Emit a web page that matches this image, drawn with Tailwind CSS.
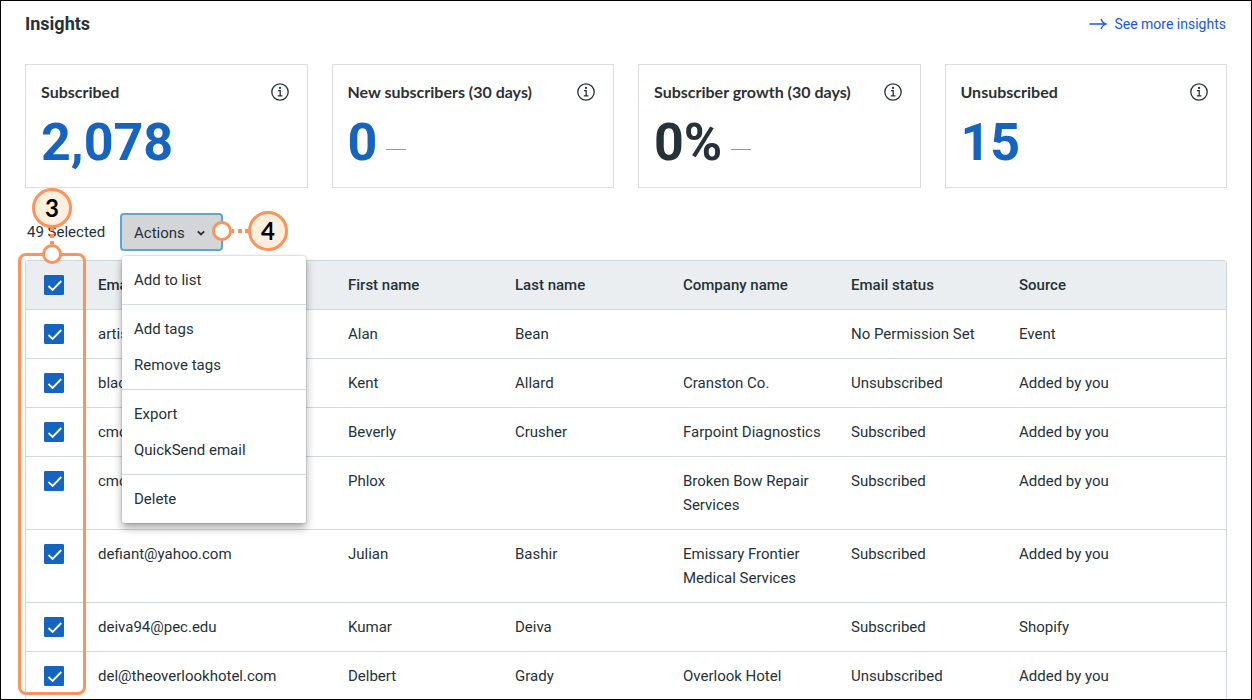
<!DOCTYPE html>
<html lang="en">
<head>
    <meta charset="UTF-8">
    <meta name="viewport" content="width=device-width, initial-scale=1.0">
    <title>Contacts</title>
    <script src="https://cdn.jsdelivr.net/npm/@tailwindcss/browser@4"></script>
</head>
<body class="h-screen overflow-hidden border border-black bg-white px-6 font-['Roboto',sans-serif] text-[15px] leading-6 text-[#263238]">
    <!-- Insights header -->
    <header class="flex items-center justify-between pt-[11px] pr-px">
        <h1 class="text-lg leading-6 font-bold">Insights</h1>
        <a href="#" class="flex items-center gap-[7px] text-sm leading-6 text-[#1856ed]">
            <svg class="h-3 w-[18px]" viewBox="0 0 18 12" fill="none" stroke="currentColor" stroke-width="1.3"><path d="M.5 6h16.500M12 1Q13.500 5 17 6Q13.500 7 12 11"/></svg>
            See more insights
        </a>
    </header>

    <!-- Stat cards -->
    <section class="mt-7 grid grid-cols-4 gap-6">
        <article class="h-[124px] border border-[#dcdddd] pt-[15px] pr-[18px] pl-[15px]">
            <div class="flex items-center justify-between">
                <h2 class="font-['Lato',sans-serif] text-base leading-6 font-bold text-[#2d3133]">Subscribed</h2>
                <button type="button" aria-label="About subscribed"><svg class="h-[18px] w-[18px]" viewBox="0 0 18 18" fill="none" stroke="currentColor" stroke-width="1.3"><circle cx="9" cy="9" r="8.200"/><path d="M7 7.600h2.200v5.200M6.800 12.900h4.600"/><circle cx="9" cy="4.900" r=".5"/></svg></button>
            </div>
            <p class="mt-[6px] text-[52px] leading-[66px] font-bold text-[#1565c0]">2,078</p>
        </article>
        <article class="h-[124px] border border-[#dcdddd] pt-[15px] pr-[18px] pl-[15px]">
            <div class="flex items-center justify-between">
                <h2 class="font-['Lato',sans-serif] text-base leading-6 font-bold text-[#2d3133]">New subscribers (30 days)</h2>
                <button type="button" aria-label="About new subscribers"><svg class="h-[18px] w-[18px]" viewBox="0 0 18 18" fill="none" stroke="currentColor" stroke-width="1.3"><circle cx="9" cy="9" r="8.200"/><path d="M7 7.600h2.200v5.200M6.800 12.900h4.600"/><circle cx="9" cy="4.900" r=".5"/></svg></button>
            </div>
            <div class="mt-[6px] flex items-center gap-[9px]">
                <p class="text-[52px] leading-[66px] font-bold text-[#1565c0]">0</p>
                <span class="mt-3 h-px w-5 bg-[#969a9c]"></span>
            </div>
        </article>
        <article class="h-[124px] border border-[#dcdddd] pt-[15px] pr-[18px] pl-[15px]">
            <div class="flex items-center justify-between">
                <h2 class="font-['Lato',sans-serif] text-base leading-6 font-bold text-[#2d3133]">Subscriber growth (30 days)</h2>
                <button type="button" aria-label="About subscriber growth"><svg class="h-[18px] w-[18px]" viewBox="0 0 18 18" fill="none" stroke="currentColor" stroke-width="1.3"><circle cx="9" cy="9" r="8.200"/><path d="M7 7.600h2.200v5.200M6.800 12.900h4.600"/><circle cx="9" cy="4.900" r=".5"/></svg></button>
            </div>
            <div class="mt-[6px] flex items-center gap-[9px]">
                <p class="text-[52px] leading-[66px] font-bold">0%</p>
                <span class="mt-3 h-px w-5 bg-[#969a9c]"></span>
            </div>
        </article>
        <article class="h-[124px] border border-[#dcdddd] pt-[15px] pr-[18px] pl-[15px]">
            <div class="flex items-center justify-between">
                <h2 class="font-['Lato',sans-serif] text-base leading-6 font-bold text-[#2d3133]">Unsubscribed</h2>
                <button type="button" aria-label="About unsubscribed"><svg class="h-[18px] w-[18px]" viewBox="0 0 18 18" fill="none" stroke="currentColor" stroke-width="1.3"><circle cx="9" cy="9" r="8.200"/><path d="M7 7.600h2.200v5.200M6.800 12.900h4.600"/><circle cx="9" cy="4.900" r=".5"/></svg></button>
            </div>
            <p class="mt-[6px] text-[52px] leading-[66px] font-bold text-[#1565c0]">15</p>
        </article>
    </section>

    <!-- Bulk actions -->
    <div class="mt-[25px] flex items-center pl-[2px]">
        <span class="w-[93px]">49 Selected</span>
        <div class="relative">
            <button type="button" aria-expanded="true" class="flex h-[38px] items-center gap-[11px] rounded border-2 border-[#59a9d8] bg-[#d4d5d7] pt-px pr-[15px] pl-3">
                Actions
                <svg class="h-2 w-[10px]" viewBox="0 0 10 8" fill="none" stroke="currentColor" stroke-width="1.8"><path d="M1.800 2.300 5 5.500 8.200 2.300"/></svg>
            </button>
            <!-- Actions menu -->
            <div role="menu" class="absolute top-[43px] left-[2px] z-10 flex w-[184px] flex-col divide-y divide-[#cfd8dc] rounded-[2px] bg-white shadow-[0_0_2px_rgba(0,0,0,0.3),0_5px_9px_rgba(0,0,0,0.35)]">
                <div class="flex flex-col py-[6px]">
                    <button type="button" role="menuitem" class="h-9 px-3 text-left">Add to list</button>
                </div>
                <div class="flex flex-col py-[6px]">
                    <button type="button" role="menuitem" class="h-9 px-3 text-left">Add tags</button>
                    <button type="button" role="menuitem" class="h-9 px-3 text-left">Remove tags</button>
                </div>
                <div class="flex flex-col py-[6px]">
                    <button type="button" role="menuitem" class="h-9 px-3 text-left">Export</button>
                    <button type="button" role="menuitem" class="h-9 px-3 text-left">QuickSend email</button>
                </div>
                <div class="flex flex-col py-[6px]">
                    <button type="button" role="menuitem" class="h-9 px-3 text-left">Delete</button>
                </div>
            </div>
            <!-- Step 4 callout -->
            <div class="absolute top-[-2px] left-[92px] z-20 flex items-center">
                <span class="h-5 w-5 rounded-full border-3 border-[#ff915a] bg-white"></span>
                <svg class="h-1 w-4" viewBox="0 0 16 4" fill="#ff915a"><path d="M0 0h2v4h-2zM6 0h4v4h-4zM13 0h3v4h-3z"/></svg>
                <span class="flex h-10 w-10 items-center justify-center rounded-full border-3 border-[#ff915a] bg-[#fff0dd] font-['Lato',sans-serif] text-2xl font-bold text-black">4</span>
            </div>
        </div>
    </div>

    <!-- Contacts table -->
    <div class="relative mt-[9px] rounded-t-[3px] border border-[#cfd8dc]">
        <table class="w-full table-fixed text-left">
            <colgroup>
                <col class="w-14">
                <col class="w-[250px]">
                <col class="w-[167px]">
                <col class="w-[168px]">
                <col class="w-[168px]">
                <col class="w-[168px]">
                <col>
            </colgroup>
            <thead class="bg-[#eaeef0]">
                <tr>
                    <th class="py-[14px] pl-[18px] align-top">
                        <span class="grid h-5 w-5">
                            <input type="checkbox" checked aria-label="Select all" class="peer col-start-1 row-start-1 h-5 w-5 appearance-none rounded-[1px] border border-[#1565c0] checked:bg-[#1565c0]">
                            <svg class="pointer-events-none invisible col-start-1 row-start-1 h-5 w-5 peer-checked:visible" viewBox="0 0 20 20" fill="none" stroke="white" stroke-width="1.8"><path d="M4.500 11 8.600 15 17.300 6"/></svg>
                        </span>
                    </th>
                    <th class="py-3 pl-4 font-medium">Email</th>
                    <th class="py-3 pl-4 font-medium">First name</th>
                    <th class="py-3 pl-4 font-medium">Last name</th>
                    <th class="py-3 pl-4 font-medium">Company name</th>
                    <th class="py-3 pl-4 font-medium">Email status</th>
                    <th class="py-3 pl-4 font-medium">Source</th>
                </tr>
            </thead>
            <tbody id="contacts"></tbody>
        </table>
        <!-- Step 3 callout -->
        <div class="pointer-events-none absolute top-[-8px] left-[-8px] h-[442px] w-[68px] rounded-lg border-3 border-[#ff915a]"></div>
        <div class="absolute top-[-73px] left-[6px] flex flex-col items-center">
            <span class="flex h-10 w-10 items-center justify-center rounded-full border-3 border-[#ff915a] bg-[#fff0dd] font-['Lato',sans-serif] text-2xl font-bold text-black">3</span>
            <svg class="h-4 w-1" viewBox="0 0 4 16" fill="#ff915a"><path d="M0 0h4v3h-4zM0 6h4v4h-4zM0 13h4v3h-4z"/></svg>
            <span class="h-5 w-5 rounded-full border-3 border-[#ff915a] bg-white"></span>
        </div>
    </div>

    <script>
        const contacts = [
            ['artist@pec.edu', 'Alan', 'Bean', '', 'No Permission Set', 'Event'],
            ['black@pec.edu', 'Kent', 'Allard', 'Cranston Co.', 'Unsubscribed', 'Added by you'],
            ['cmo@yahoo.com', 'Beverly', 'Crusher', 'Farpoint Diagnostics', 'Subscribed', 'Added by you'],
            ['cmo@pec.edu', 'Phlox', '', 'Broken Bow Repair Services', 'Subscribed', 'Added by you'],
            ['defiant@yahoo.com', 'Julian', 'Bashir', 'Emissary Frontier Medical Services', 'Subscribed', 'Added by you'],
            ['deiva94@pec.edu', 'Kumar', 'Deiva', '', 'Subscribed', 'Shopify'],
            ['del@theoverlookhotel.com', 'Delbert', 'Grady', 'Overlook Hotel', 'Unsubscribed', 'Added by you']
        ];

        document.getElementById('contacts').innerHTML = contacts.map(row => `
            <tr class="border-t border-[#cfd8dc] align-top">
                <td class="py-[14px] pl-[18px]">
                    <span class="grid h-5 w-5">
                        <input type="checkbox" checked aria-label="Select ${row[0]}" class="peer col-start-1 row-start-1 h-5 w-5 appearance-none rounded-[1px] border border-[#1565c0] checked:bg-[#1565c0]">
                        <svg class="pointer-events-none invisible col-start-1 row-start-1 h-5 w-5 peer-checked:visible" viewBox="0 0 20 20" fill="none" stroke="white" stroke-width="1.8"><path d="M4.500 11 8.600 15 17.300 6"/></svg>
                    </span>
                </td>
                ${row.map(cell => `<td class="py-3 pl-4">${cell}</td>`).join('')}
            </tr>
        `).join('');
    </script>
</body>
</html>
